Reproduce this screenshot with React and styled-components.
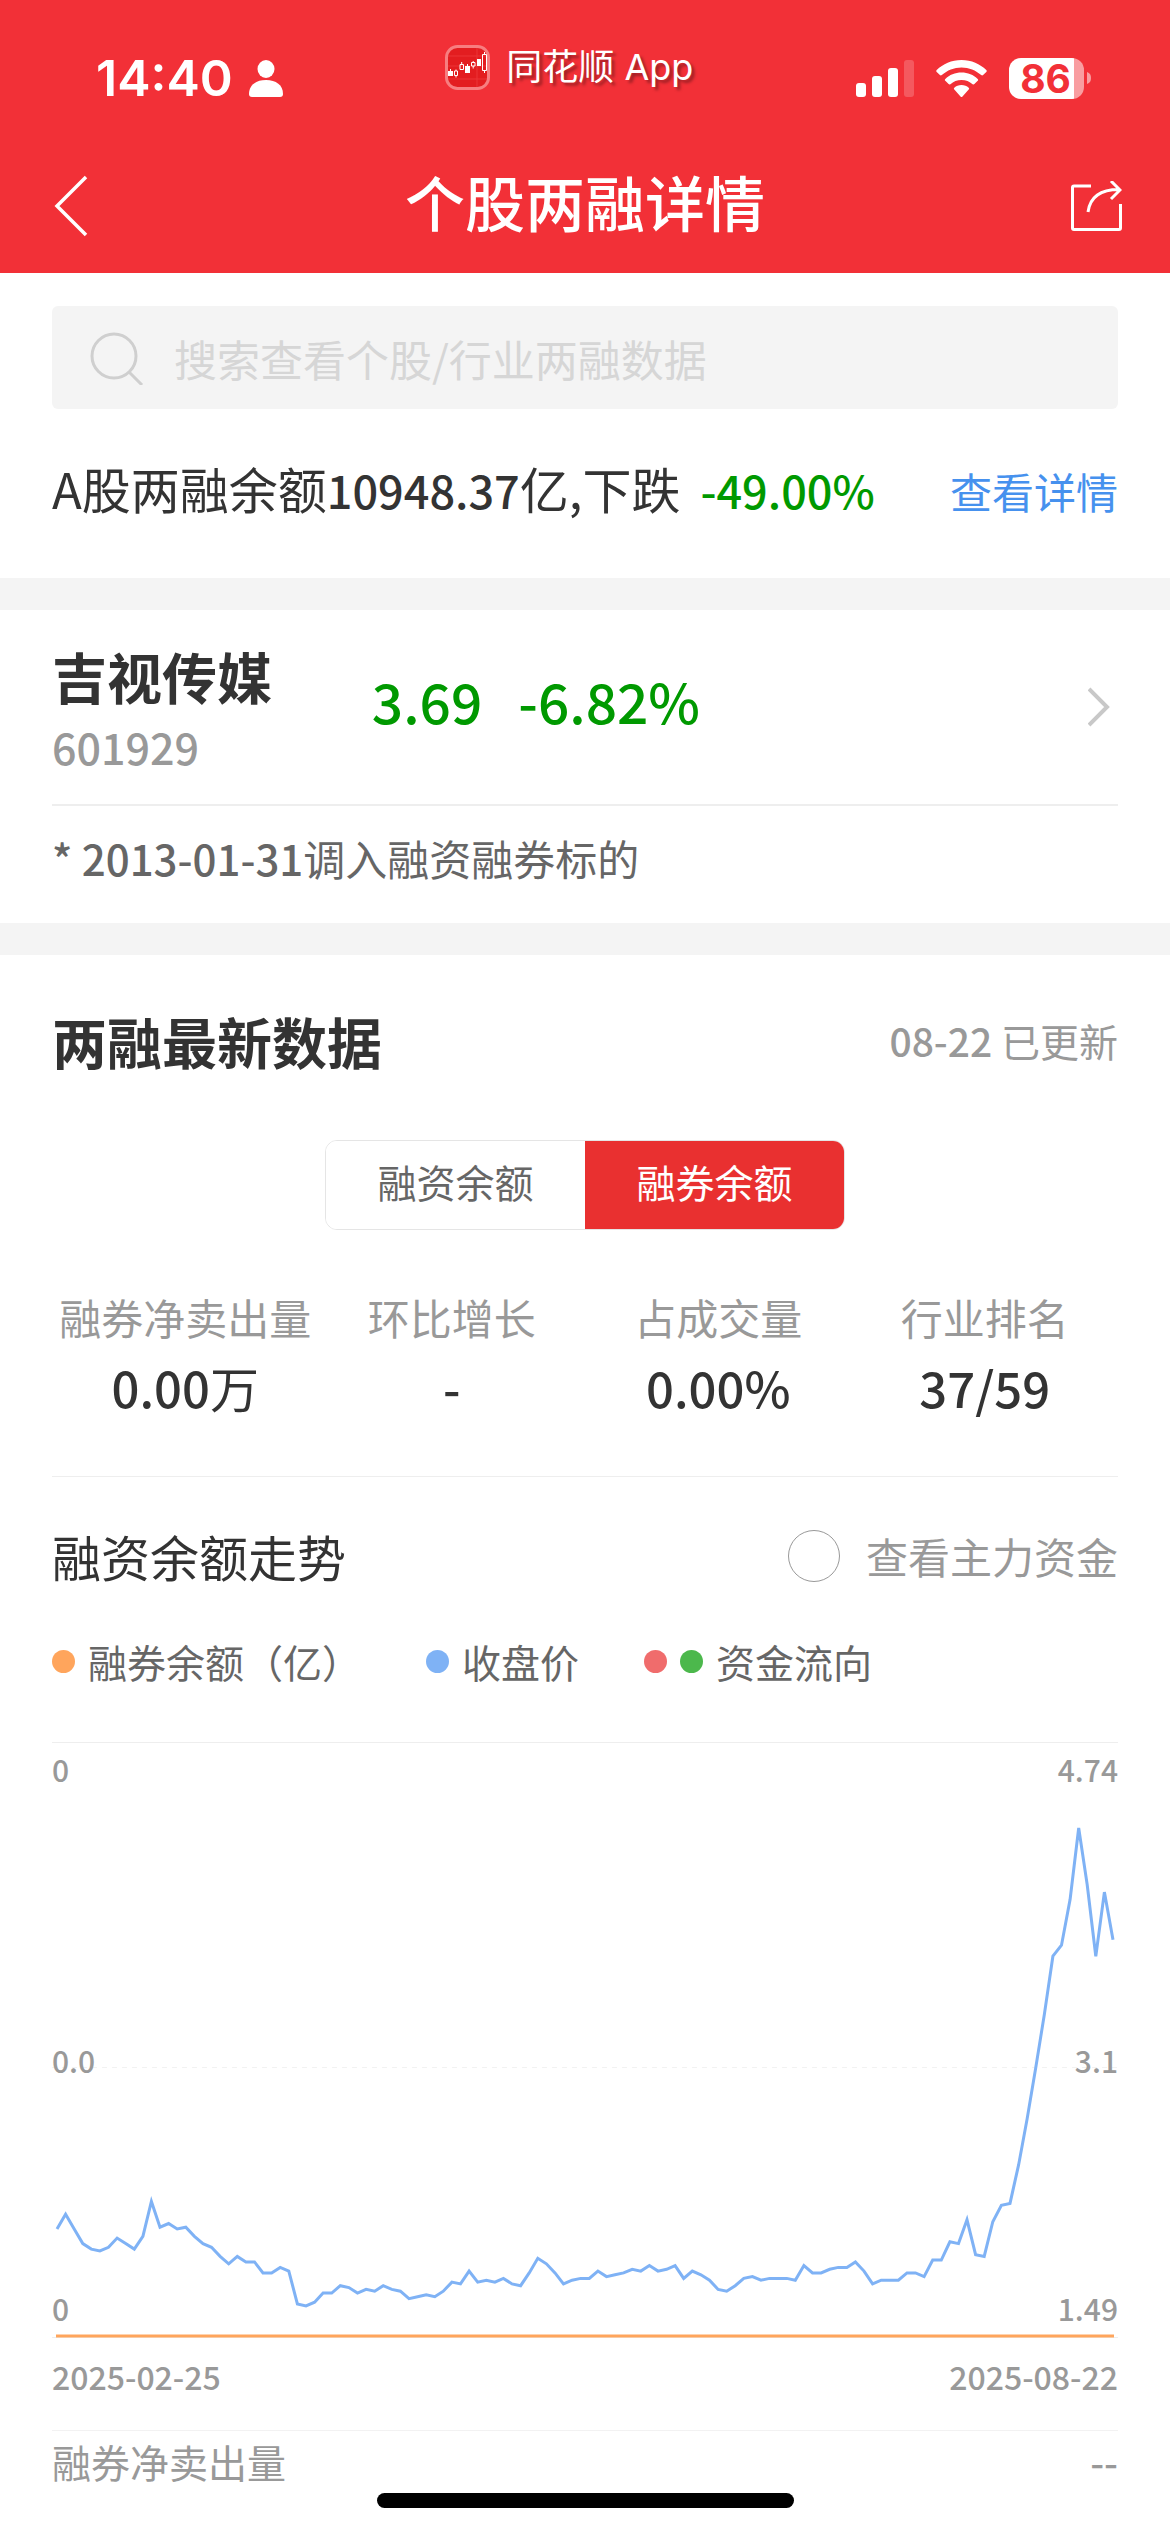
import React, { useState } from 'react';
import styled, { createGlobalStyle, css } from 'styled-components';

const prices = [
  208, 216, 208, 200, 197, 196, 198, 203, 200, 197, 204, 223, 209, 211, 208, 209,
  204, 200, 198, 193, 189, 193, 190, 190, 184, 184, 187, 185, 167, 166, 168, 173,
  173, 177, 176, 173, 175, 174, 177, 175, 174, 170, 171, 172, 171, 174, 179, 178,
  185, 179, 180, 179, 181, 178, 177, 184, 192, 189, 184, 178, 180, 181, 181, 185,
  182, 183, 184, 186, 185, 188, 185, 186, 188, 181, 185, 183, 180, 175, 174, 177,
  181, 182, 180, 181, 181, 181, 180, 188, 184, 184, 186, 187, 187, 190, 185, 178,
  180, 180, 180, 184, 184, 182, 191, 191, 201, 200, 213, 194, 193, 212, 221, 222,
  243, 268, 296, 325, 357, 363, 388, 427, 396, 357, 392, 366,
];

const stats = [
  { label: '融券净卖出量', value: '0.00', unit: '万' },
  { label: '环比增长', value: '-' },
  { label: '占成交量', value: '0.00%' },
  { label: '行业排名', value: '37/59' },
];

const legends = [
  { text: '融券余额（亿）', colors: ['#ffa55c'] },
  { text: '收盘价', colors: ['#7fb2f5'] },
  { text: '资金流向', colors: ['#f06c6c', '#4cb84c'] },
];

const axisRows = [
  { top: 7, left: '0', right: '4.74' },
  { top: 298, left: '0.0', right: '3.1' },
  { top: 546, left: '0', right: '1.49' },
];

const CHART_WIDTH = 1066;
const CHART_HEIGHT = 596;

// 价格（分）转换为折线坐标
const linePoints = prices
  .map((price, i) => {
    const x = 5 + (i * (CHART_WIDTH - 10)) / (prices.length - 1);
    const y = CHART_HEIGHT - 1 - ((price - 149) * (CHART_HEIGHT - 1)) / 325;
    return `${x.toFixed(1)},${y.toFixed(1)}`;
  })
  .join(' ');

const PriceChart = () => (
  <ChartSvg viewBox={`0 0 ${CHART_WIDTH} ${CHART_HEIGHT}`} aria-hidden="true">
    <path d="M0 .5H1066M0 595.5H1066" stroke="#eeeeee" />
    <path d="M0 325.5H1066" stroke="#f2f2f2" strokeDasharray="5 5" />
    <path d="M4 594H1062" stroke="#ffa55c" strokeWidth="3" />
    <polyline points={linePoints} fill="none" stroke="#7fb2f5" strokeWidth="3" />
  </ChartSvg>
);

const App = () => {
  const [tab, setTab] = useState('券');
  const [showMain, setShowMain] = useState(false);
  const [keyword, setKeyword] = useState('');

  return (
    <Page>
      <GlobalStyle />
      <Header>
        <StatusBar>
          <StatusGroup $gap="16px">
            <Time>14:40</Time>
            <svg width="34" height="37" viewBox="0 0 34 37" fill="#fff">
              <ellipse cx="17" cy="9" rx="8.5" ry="9" />
              <path d="M0 34c0-9 7-14 17-14s17 5 17 14c0 2-1 3-3 3H3c-2 0-3-1-3-3z" />
            </svg>
          </StatusGroup>
          <AppBadge>
            <svg width="45" height="45" viewBox="0 0 45 45" fill="none">
              <rect x="1.5" y="1.5" width="42" height="42" rx="11" fill="#e31d20" stroke="#f77e80" strokeWidth="3" />
              <path d="M3 11h39M3 21h39M3 34h39M32 3v39" stroke="#ec3437" />
              <g fill="#fff">
                <path d="M3 26h5v5H3zM20 21h5v7h-5zM32 14h4v7h-4z" />
                <path d="M5 24h1v2H5zM22 19h1v2h-1z" />
              </g>
              <path
                d="M9.5 26h3v4.500h-3zM15 19.500h3.500v5H15zM26.500 17.500h3.500v3.500h-3.500zM37.500 9.500h4v16h-4zM11 24.500v1.500M11 30.500v2M16.700 17v2.500M28.200 16v1.500M28.200 21v2.500M39.500 7v2.500M39.500 25.500v2.500"
                stroke="#fff"
              />
            </svg>
            <span>同花顺 App</span>
          </AppBadge>
          <StatusGroup $gap="22px">
            <svg width="58" height="37" viewBox="0 0 58 37" fill="#fff">
              <rect y="23" width="10" height="14" rx="3" />
              <rect x="16" y="16" width="10" height="21" rx="3" />
              <rect x="32" y="8" width="10" height="29" rx="3" />
              <rect x="48" width="10" height="37" rx="3" opacity=".2" />
            </svg>
            <svg width="51" height="37" viewBox="0 0 51 37" fill="#fff">
              <path d="M25.500 0C35.500 0 44 4 50.300 10c.6.6.6 1.300 0 1.900l-3.200 3.200c-.6.6-1.300.6-1.900 0C39.800 10.300 33 7.500 25.500 7.500S11.200 10.300 5.800 15.100c-.6.6-1.300.6-1.900 0L.7 11.900c-.6-.6-.6-1.300 0-1.900C7 4 15.500 0 25.500 0z" />
              <path d="M25.500 12.500c6.300 0 12 2.400 16.200 6.400.6.6.6 1.300 0 1.900l-3.300 3.300c-.6.6-1.200.6-1.800.1-3-2.600-6.800-4.200-11.100-4.200s-8.100 1.600-11.100 4.200c-.6.5-1.200.5-1.800-.1l-3.300-3.300c-.6-.6-.6-1.300 0-1.900 4.200-4 9.900-6.400 16.200-6.400z" />
              <path d="M25.500 25c2.900 0 5.300 1 7.200 2.700.6.5.6 1.200 0 1.800l-6.200 6.900c-.6.700-1.400.7-2 0l-6.200-6.900c-.6-.6-.6-1.300 0-1.800 1.900-1.700 4.300-2.700 7.200-2.700z" />
            </svg>
            <Battery>
              <BatteryLevel>86</BatteryLevel>
              <svg width="4" height="12" viewBox="0 0 4 12" fill="#f99da0">
                <path d="M0 0c3 1 4 3 4 6s-1 5-4 6z" />
              </svg>
            </Battery>
          </StatusGroup>
        </StatusBar>
        <NavBar>
          <IconButton type="button" aria-label="返回">
            <svg width="48" height="64" viewBox="0 0 48 64" fill="none" stroke="#fff" strokeWidth="3.5">
              <path d="M38 2L9 31l29 29" />
            </svg>
          </IconButton>
          <NavTitle>个股两融详情</NavTitle>
          <IconButton type="button" aria-label="分享">
            <svg width="52" height="52" viewBox="0 0 52 52" fill="none" stroke="#fff" strokeWidth="3">
              <path d="M21 5H4q-1.500 0-1.500 1.500V47q0 1.500 1.500 1.500H49q1.500 0 1.500-1.500V23" />
              <path d="M18 31C20 16 31 8.500 49 8.500M41 0l9 9-9 9" />
            </svg>
          </IconButton>
        </NavBar>
      </Header>

      <main>
        <Section>
          <SearchBox>
            <svg width="54" height="54" viewBox="0 0 54 54" fill="none" stroke="#cfcfcf" strokeWidth="3">
              <circle cx="24" cy="25" r="22" />
              <path d="M39 41l13 13" />
            </svg>
            <SearchInput
              type="text"
              aria-label="搜索"
              placeholder="搜索查看个股/行业两融数据"
              value={keyword}
              onChange={(e) => setKeyword(e.target.value)}
            />
          </SearchBox>
          <Summary>
            <SummaryText>
              A股两融余额<Num>10948.37</Num>亿,下跌
              <Change>-49.00%</Change>
            </SummaryText>
            <DetailLink href="#detail">查看详情</DetailLink>
          </Summary>
        </Section>

        <Section>
          <StockRow href="#stock">
            <StockName>
              <h2>吉视传媒</h2>
              <span>601929</span>
            </StockName>
            <Quote>
              <span>3.69</span>
              <span>-6.82%</span>
            </Quote>
            <svg width="30" height="46" viewBox="0 0 30 46" fill="none" stroke="#c8c8c8" strokeWidth="4">
              <path d="M1 2l18 18L1 38" />
            </svg>
          </StockRow>
          <Note>
            <Digits>* 2013-01-31</Digits>调入融资融券标的
          </Note>
        </Section>

        <Section>
          <SectionHead>
            <h2>两融最新数据</h2>
            <p>
              <Digits>08-22</Digits> 已更新
            </p>
          </SectionHead>
          <Tabs>
            <TabButton type="button" $active={tab === '资'} onClick={() => setTab('资')}>
              融资余额
            </TabButton>
            <TabButton type="button" $active={tab === '券'} onClick={() => setTab('券')}>
              融券余额
            </TabButton>
          </Tabs>
          <StatGrid>
            {stats.map((stat) => (
              <Stat key={stat.label}>
                <dt>{stat.label}</dt>
                <dd>
                  {stat.value}
                  {stat.unit && <Unit>{stat.unit}</Unit>}
                </dd>
              </Stat>
            ))}
          </StatGrid>

          <TrendHead>
            <h3>融资余额走势</h3>
            <MainFundLabel>
              <RoundCheck
                type="checkbox"
                checked={showMain}
                onChange={(e) => setShowMain(e.target.checked)}
              />
              查看主力资金
            </MainFundLabel>
          </TrendHead>
          <LegendRow>
            {legends.map(({ text, colors }) => (
              <Legend key={text}>
                {colors.map((color) => (
                  <Dot key={color} $color={color} />
                ))}
                {text}
              </Legend>
            ))}
          </LegendRow>
          <Chart>
            <PriceChart />
            {axisRows.map(({ top, left, right }) => (
              <AxisRow key={top} $top={top}>
                <span>{left}</span>
                <span>{right}</span>
              </AxisRow>
            ))}
          </Chart>
          <DateRow>
            <span>2025-02-25</span>
            <span>2025-08-22</span>
          </DateRow>
          <BottomRow>
            <span>融券净卖出量</span>
            <Digits>--</Digits>
          </BottomRow>
        </Section>
      </main>
      <HomeIndicator />
    </Page>
  );
};

export default App;

const GlobalStyle = createGlobalStyle`
  * {
    box-sizing: border-box;
  }
  body {
    margin: 0;
    background-color: #fff;
    color: #333;
    font-family: "Noto Sans CJK SC", sans-serif;
  }
  h1, h2, h3, p, dl, dd {
    margin: 0;
  }
  button, input {
    font-family: inherit;
  }
  svg {
    display: block;
    flex: none;
  }
`;

const spaceBetween = css`
  display: flex;
  justify-content: space-between;
`;

const Page = styled.div`
  min-height: 100vh;
`;

const Header = styled.header`
  background-color: #f23037;
  color: #fff;
`;

const StatusBar = styled.div`
  ${spaceBetween}
  align-items: center;
  height: 128px;
  padding: 28px 79px 0 96px;
  font-family: Inter, "Noto Sans CJK SC", sans-serif;
`;

const StatusGroup = styled.div`
  display: flex;
  align-items: center;
  gap: ${({ $gap }) => $gap};
`;

const Time = styled.span`
  font-size: 50px;
  font-weight: 600;
  line-height: 60px;
`;

const AppBadge = styled.div`
  display: flex;
  align-items: center;
  gap: 16px;
  margin-bottom: 22px;
  font-size: 36px;
  line-height: 45px;
  text-shadow: 3px 3px 3px rgba(0, 0, 0, 0.35);
`;

const Battery = styled.div`
  display: flex;
  align-items: center;
  gap: 3px;
`;

const BatteryLevel = styled.span`
  width: 75px;
  padding-right: 2px;
  border-radius: 12px;
  background: linear-gradient(to right, #fff 65px, #f99da0 65px);
  color: #f23037;
  font-size: 39px;
  font-weight: 700;
  line-height: 41px;
  text-align: center;
`;

const NavBar = styled.div`
  display: grid;
  grid-template-columns: 1fr auto 1fr;
  align-items: center;
  height: 145px;
  padding: 0 48px;
`;

const NavTitle = styled.h1`
  font-size: 60px;
  font-weight: 500;
  line-height: 80px;
`;

const IconButton = styled.button`
  justify-self: start;
  padding: 12px 0 0;
  border: none;
  background: none;
  cursor: pointer;
  &:last-child {
    justify-self: end;
  }
`;

const Section = styled.section`
  padding: 0 52px;
  & + & {
    border-top: 32px solid #f4f4f4;
  }
  &:first-child {
    padding-top: 33px;
  }
`;

const SearchBox = styled.div`
  display: flex;
  align-items: center;
  gap: 30px;
  height: 103px;
  padding: 0 38px;
  border-radius: 6px;
  background-color: #f4f4f4;
`;

const SearchInput = styled.input`
  flex: 1;
  min-width: 0;
  padding: 0;
  border: none;
  background: none;
  color: #333;
  font-size: 43px;
  line-height: 60px;
  &:focus {
    outline: none;
  }
  &::placeholder {
    color: #d6d6d6;
  }
`;

const Summary = styled.div`
  ${spaceBetween}
  align-items: baseline;
  padding: 43px 0 51px;
  line-height: 72px;
`;

const SummaryText = styled.p`
  font-size: 49px;
`;

const Digits = styled.span`
  font-weight: 500;
`;

const Num = styled(Digits)`
  font-size: 45px;
`;

const Change = styled(Num)`
  margin-left: 20px;
  color: #009900;
`;

const DetailLink = styled.a`
  color: #4691ee;
  font-size: 42px;
  text-decoration: none;
`;

const StockRow = styled.a`
  display: flex;
  align-items: center;
  padding: 29px 0 23px;
  border-bottom: 2px solid #eee;
  color: #333;
  text-decoration: none;
`;

const StockName = styled.div`
  flex: 0 0 30%;
  h2 {
    font-size: 55px;
    font-weight: 700;
    line-height: 72px;
  }
  span {
    display: block;
    color: #999;
    font-size: 43px;
    font-weight: 500;
    line-height: 70px;
  }
`;

const Quote = styled.div`
  display: flex;
  flex: 1;
  gap: 36px;
  margin-bottom: 20px;
  color: #009900;
  font-size: 55px;
  font-weight: 500;
  line-height: 72px;
`;

const Note = styled.p`
  padding: 22px 0 35px;
  color: #666;
  font-size: 42px;
  line-height: 60px;
`;

const SectionHead = styled.div`
  ${spaceBetween}
  align-items: center;
  padding-top: 50px;
  line-height: 70px;
  h2 {
    font-size: 55px;
    font-weight: 700;
  }
  p {
    color: #999;
    font-size: 39px;
  }
`;

const Tabs = styled.div`
  display: flex;
  width: 520px;
  margin: 65px auto 57px;
  overflow: hidden;
  border: 1px solid #e5e5e5;
  border-radius: 12px;
`;

const TabButton = styled.button`
  flex: 1;
  padding: 12px 0 20px;
  border: none;
  background-color: ${({ $active }) => ($active ? '#e93030' : '#fff')};
  color: ${({ $active }) => ($active ? '#fff' : '#666')};
  font-size: 39px;
  line-height: 56px;
  cursor: pointer;
`;

const StatGrid = styled.dl`
  display: grid;
  grid-template-columns: repeat(4, 1fr);
  padding-bottom: 53px;
  border-bottom: 1px solid #eee;
`;

const Stat = styled.div`
  text-align: center;
  white-space: nowrap;
  dt {
    color: #999;
    font-size: 42px;
    line-height: 60px;
  }
  dd {
    margin-top: 4px;
    font-size: 49px;
    font-weight: 500;
    line-height: 72px;
  }
`;

const Unit = styled.span`
  font-weight: 400;
`;

const TrendHead = styled.div`
  ${spaceBetween}
  align-items: center;
  padding-top: 44px;
  line-height: 70px;
  h3 {
    font-size: 49px;
    font-weight: 400;
  }
`;

const MainFundLabel = styled.label`
  display: flex;
  align-items: center;
  gap: 26px;
  color: #999;
  font-size: 42px;
`;

const RoundCheck = styled.input`
  appearance: none;
  width: 52px;
  height: 52px;
  margin: 0;
  border: 1px solid #999;
  border-radius: 50%;
  &:checked {
    background-color: #e93030;
  }
`;

const LegendRow = styled.div`
  display: flex;
  gap: 65px;
  padding: 42px 0 53px;
`;

const Legend = styled.div`
  display: flex;
  align-items: center;
  gap: 13px;
  color: #666;
  font-size: 39px;
  line-height: 56px;
`;

const Dot = styled.i`
  width: 23px;
  height: 23px;
  border-radius: 50%;
  background-color: ${({ $color }) => $color};
`;

const Chart = styled.div`
  position: relative;
`;

const ChartSvg = styled.svg`
  width: 100%;
`;

const AxisRow = styled.div`
  ${spaceBetween}
  position: absolute;
  top: ${({ $top }) => $top}px;
  right: 0;
  left: 0;
  color: #999;
  font-size: 30px;
  font-weight: 500;
  line-height: 40px;
`;

const DateRow = styled.div`
  ${spaceBetween}
  padding: 16px 0 32px;
  border-bottom: 1px solid #f2f2f2;
  color: #999;
  font-size: 32px;
  font-weight: 500;
  line-height: 44px;
`;

const BottomRow = styled.div`
  ${spaceBetween}
  padding-top: 2px;
  color: #999;
  font-size: 39px;
  line-height: 56px;
`;

const HomeIndicator = styled.div`
  position: fixed;
  right: 0;
  bottom: 24px;
  left: 0;
  width: 417px;
  height: 15px;
  margin: 0 auto;
  border-radius: 8px;
  background-color: #000;
`;
